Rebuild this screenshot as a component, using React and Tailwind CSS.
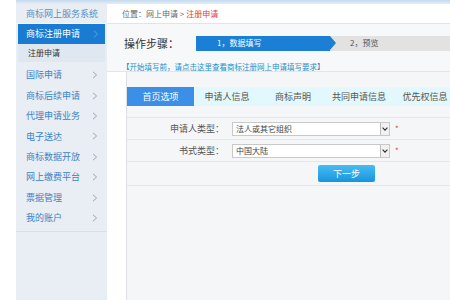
const menu = ['国际申请', '商标后续申请', '代理申请业务', '电子送达', '商标数据开放', '网上缴费平台', '票据管理', '我的账户'];
const tabs = ['申请人信息', '商标声明', '共同申请信息', '优先权信息'];

function Chevron({ className = '' }) {
  return (
    <svg width="6" height="8" viewBox="0 0 6 8" className={className}>
      <path d="M1 0.8 L4.6 4 L1 7.2" fill="none" stroke="currentColor" strokeWidth="1" />
    </svg>
  );
}

function SelectBox({ value }) {
  return (
    <div className="w-[158px] h-[14px] bg-white border border-[#c9c9c9] flex items-center">
      <span className="flex-1 pl-[3px] text-[8px] text-[#444] leading-none">{value}</span>
      <div className="w-[9px] h-[12px] border-l border-[#bbb] bg-[#f1f1f1] flex items-center justify-center text-[#333]">
        <svg width="6" height="4" viewBox="0 0 6 4">
          <path d="M0.6 0.6 L3 3.2 L5.4 0.6" fill="none" stroke="currentColor" strokeWidth="1.1" />
        </svg>
      </div>
    </div>
  );
}

function FormRow({ label, value }) {
  return (
    <div className="h-[22px] flex items-center border-b border-[#e4e6e9]">
      <div className="w-[105px] text-right text-[9px] text-[#555] pr-[8px]">{label}</div>
      <SelectBox value={value} />
      <span className="ml-[5px] text-[8px] text-[#e03c3c] leading-none">*</span>
    </div>
  );
}

export default function App() {
  return (
    <div className="w-[450px] h-[300px] flex bg-white overflow-hidden font-['Noto_Sans_CJK_SC','Noto_Sans',sans-serif]">
      <div className="w-[16px] shrink-0 bg-white" />
      <div className="flex-1 flex flex-col">
        <div className="h-[4px] bg-gradient-to-b from-[#c5d9ee] to-[#e3edf7]" />
        <div className="flex flex-1">
          {/* sidebar */}
          <div className="w-[91px] shrink-0 bg-[#e8eef3] flex flex-col">
            <div className="h-[20px] flex items-center pl-[10px] text-[9px] text-[#5b8fc4] border-b border-[#f4f7fa]">
              商标网上服务系统
            </div>
            <div className="mx-[2px] h-[20px] bg-[#1a7bd3] flex items-center pl-[8px] pr-[6px] text-[9px] text-white">
              <span className="flex-1">商标注册申请</span>
              <Chevron className="text-[#5c9ee0]" />
            </div>
            <div className="mx-[2px] h-[18px] bg-[#dfe8f1] flex items-center pl-[10px] text-[8px] text-[#333]">
              注册申请
            </div>
            <div className="mt-[3px] pb-[3px] border-b border-[#d9dfe5]">
              {menu.map((m) => (
                <div key={m} className="h-[20.4px] flex items-center pl-[10px] pr-[9px] text-[9px] text-[#3b83c8]">
                  <span className="flex-1">{m}</span>
                  <Chevron className="text-[#9aa6b2]" />
                </div>
              ))}
            </div>
          </div>

          {/* main */}
          <div className="flex-1 flex flex-col bg-white">
            <div className="h-[20px] flex items-center pl-[15px] text-[8px] text-[#666] border-b border-[#e2e5e8]">
              位置：网上申请 &gt; <span className="ml-[2px] text-[#e23b3b]">注册申请</span>
            </div>
            <div className="bg-[#f7f8fa] pl-[17px] border-b border-[#e3e5e8]">
              <div className="h-[38px] flex items-center">
                <span className="w-[72px] text-[11px] text-[#333]">操作步骤：</span>
                <div className="flex-1 h-[15px] flex items-center bg-[#e2e2e2]">
                  <div className="w-[134px] h-full bg-[#1b7fd6] flex items-center pl-[21px] text-[8px] text-white">1，数据填写</div>
                  <div className="w-0 h-0 border-y-[7.5px] border-y-transparent border-l-[6px] border-l-[#1b7fd6]" />
                  <span className="ml-[14px] text-[8px] text-[#555]">2，预览</span>
                </div>
              </div>
              <div className="h-[9px] text-[7.5px] leading-[9px] text-[#1f8fc4] -ml-[2px]">
                【开始填写前，请点击这里查看商标注册网上申请填写要求】
              </div>
            </div>
            <div className="flex flex-1">
              <div className="w-[19px] shrink-0 bg-white" />
              <div className="flex-1 bg-[#f5f6f8] border-l border-[#dcdfe3] pt-[15px] flex flex-col">
                <div className="h-[19px] flex items-stretch bg-[#e2f8fc]">
                  <div className="w-[67px] bg-[#3c8fe6] flex items-center justify-center text-[9px] text-white">首页选项</div>
                  {tabs.map((t) => (
                    <div key={t} className="w-[66px] flex items-center justify-center text-[9px] text-[#555]">
                      {t}
                    </div>
                  ))}
                </div>
                <div className="mt-[11px] border-t border-[#e4e6e9]">
                  <FormRow label="申请人类型：" value="法人或其它组织" />
                  <FormRow label="书式类型：" value="中国大陆" />
                  <div className="h-[24px] flex items-center border-b border-[#e4e6e9] pl-[191px]">
                    <div className="w-[57px] h-[17px] rounded-[2px] bg-gradient-to-b from-[#46bdf3] to-[#1594dc] flex items-center justify-center text-[9px] text-white">
                      下一步
                    </div>
                  </div>
                </div>
              </div>
            </div>
          </div>
        </div>
      </div>
    </div>
  );
}
